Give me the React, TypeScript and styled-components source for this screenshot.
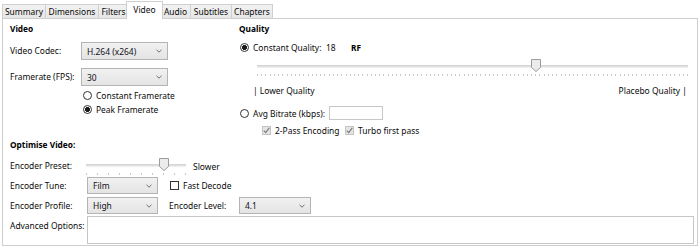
import React from 'react';
import styled, { createGlobalStyle } from 'styled-components';

const Global = createGlobalStyle`
  html, body { margin: 0; padding: 0; background: #fff; }
  body {
    font-family: "Noto Sans", "Open Sans", sans-serif;
    font-size: 8.45px;
    color: #0a0a0a;
  }
  * { box-sizing: border-box; }
`;

const Window = styled.div`
  width: 700px;
  height: 248px;
  overflow: hidden;
  background: #fff;
`;

const TabStrip = styled.div`
  display: flex;
  align-items: flex-end;
  height: 19px;
  padding-left: 2px;
  margin-bottom: -1px;
  position: relative;
  z-index: 1;
`;

const Tab = styled.div<{ $active?: boolean; $w: number; $first?: boolean }>`
  width: ${p => p.$w}px;
  height: ${p => (p.$active ? 18 : 14)}px;
  margin-bottom: ${p => (p.$active ? 0 : 1)}px;
  margin-left: ${p => (p.$first ? 0 : p.$active ? -3 : -1)}px;
  margin-right: ${p => (p.$active ? -2 : 0)}px;
  position: relative;
  z-index: ${p => (p.$active ? 2 : 1)};
  border: 1px solid #cfcfcf;
  border-bottom: none;
  background: ${p => (p.$active ? '#fff' : 'linear-gradient(#f2f2f2, #e6e6e6)')};
  display: flex;
  align-items: center;
  justify-content: center;
  white-space: nowrap;
  padding-bottom: ${p => (p.$active ? 2 : 0)}px;
`;

const Panel = styled.div`
  margin-left: 2px;
  width: 696px;
  height: 228px;
  border: 1px solid #cfcfcf;
  background: #fff;
  display: flex;
  flex-direction: column;
`;

const TopSection = styled.div`
  display: grid;
  grid-template-columns: 236px 1fr;
  padding-top: 4px;
`;

const Column = styled.div<{ $pl: number; $pr?: number }>`
  display: flex;
  flex-direction: column;
  padding-left: ${p => p.$pl}px;
  padding-right: ${p => p.$pr ?? 0}px;
`;

const SectionTitle = styled.div`
  font-weight: 700;
  font-size: 8.3px;
  height: 12px;
  line-height: 12px;
  color: #000;
`;

const Row = styled.div<{ $mt?: number; $h: number; $ml?: number }>`
  display: flex;
  align-items: center;
  height: ${p => p.$h}px;
  margin-top: ${p => p.$mt ?? 0}px;
  margin-left: ${p => p.$ml ?? 0}px;
  white-space: nowrap;
`;

const FieldLabel = styled.span<{ $w: number; $ml?: number; $pt?: number }>`
  display: inline-block;
  width: ${p => p.$w}px;
  margin-left: ${p => p.$ml ?? 0}px;
  align-self: ${p => (p.$pt ? 'flex-start' : 'auto')};
  padding-top: ${p => p.$pt ?? 0}px;
  line-height: 12px;
  flex-shrink: 0;
`;

const ComboBox = styled.div<{ $w: number; $h: number }>`
  width: ${p => p.$w}px;
  height: ${p => p.$h}px;
  border: 1px solid #b4b4b4;
  background: linear-gradient(#f1f1f1, #e4e4e4);
  display: flex;
  align-items: center;
  justify-content: space-between;
  padding: 0 5px 0 5px;
  flex-shrink: 0;
  color: #101020;
`;

const Chevron = () => (
  <svg width="6" height="4" viewBox="0 0 6 4">
    <path d="M0.5 0.8 L3 3.2 L5.5 0.8" fill="none" stroke="#707070" strokeWidth="1" />
  </svg>
);

const Combo = ({ w, h, children }: { w: number; h: number; children: React.ReactNode }) => (
  <ComboBox $w={w} $h={h}>
    <span>{children}</span>
    <Chevron />
  </ComboBox>
);

const RadioCircle = styled.span<{ $checked?: boolean }>`
  width: 9px;
  height: 9px;
  border-radius: 50%;
  border: 1px solid #333;
  background: ${p => (p.$checked ? 'radial-gradient(circle, #1a1a1a 0 2.2px, #fff 2.7px)' : '#fff')};
  flex-shrink: 0;
  margin-right: 4px;
`;

const CheckBox = styled.span<{ $checked?: boolean; $ml?: number }>`
  width: 9px;
  height: 9px;
  border: 1px solid ${p => (p.$checked ? '#c4c4c4' : '#333')};
  background: ${p => (p.$checked ? '#e4e4e4' : '#fff')};
  display: inline-flex;
  align-items: center;
  justify-content: center;
  flex-shrink: 0;
  margin-right: 4px;
  margin-left: ${p => p.$ml ?? 0}px;
`;

const CheckMark = () => (
  <svg width="7" height="7" viewBox="0 0 7 7">
    <path d="M0.8 3.6 L2.7 5.6 L6.3 0.9" fill="none" stroke="#7a7a7a" strokeWidth="1.1" />
  </svg>
);

const Check = ({ checked, ml }: { checked?: boolean; ml?: number }) => (
  <CheckBox $checked={checked} $ml={ml}>{checked && <CheckMark />}</CheckBox>
);

const TextSpan = styled.span<{ $w?: number; $bold?: boolean; $ml?: number }>`
  display: inline-block;
  width: ${p => (p.$w ? `${p.$w}px` : 'auto')};
  margin-left: ${p => p.$ml ?? 0}px;
  font-weight: ${p => (p.$bold ? 700 : 400)};
  font-size: ${p => (p.$bold ? '8.3px' : 'inherit')};
  color: ${p => (p.$bold ? '#000' : 'inherit')};
  flex-shrink: 0;
`;

const SliderBox = styled.div<{ $w: number; $ml?: number; $mt?: number }>`
  position: relative;
  width: ${p => p.$w}px;
  height: 18px;
  margin-left: ${p => p.$ml ?? 0}px;
  margin-top: ${p => p.$mt ?? 0}px;
  flex-shrink: 0;
`;

const Track = styled.div`
  margin-top: 7px;
  height: 3px;
  background: #e2e2e2;
  border-top: 1px solid #d4d4d4;
  border-bottom: 1px solid #eeeeee;
`;

const TickRow = styled.svg`
  display: block;
  margin-top: 6px;
`;

const ThumbSvg = styled.svg`
  position: absolute;
  top: 1px;
`;

const Slider = ({ w, ticks, value, ml, mt }: { w: number; ticks: number; value: number; ml?: number; mt?: number }) => {
  const xs: number[] = [];
  for (let i = 0; i <= ticks; i++) xs.push(Math.round((i * (w - 1)) / ticks) + 0.5);
  const cx = value * (w - 1);
  return (
    <SliderBox $w={w} $ml={ml} $mt={mt}>
      <Track />
      <TickRow width={w} height="2" viewBox={`0 0 ${w} 2`}>
        {xs.map((x, i) => (
          <line key={i} x1={x} x2={x} y1="0" y2="2" stroke="#c8c8c8" strokeWidth="1" />
        ))}
      </TickRow>
      <ThumbSvg width="10" height="13" viewBox="0 0 10 13" style={{ left: `${cx - 4.5}px` }}>
        <path d="M0.5 0.5 H9.5 V8.5 L5 12.5 L0.5 8.5 Z" fill="#ececec" stroke="#9c9c9c" strokeWidth="1" />
      </ThumbSvg>
    </SliderBox>
  );
};

const ScaleLabels = styled.div`
  display: flex;
  justify-content: space-between;
  width: 434px;
  margin-left: 14px;
  margin-top: 9px;
  height: 12px;
  line-height: 12px;
  white-space: nowrap;
`;

const TextInput = styled.div<{ $w: number; $h: number }>`
  width: ${p => p.$w}px;
  height: ${p => p.$h}px;
  border: 1px solid #c6c6c6;
  background: #fff;
  flex-shrink: 0;
`;

const BottomSection = styled.div`
  display: flex;
  flex-direction: column;
  padding-left: 7px;
  margin-top: 2px;
`;

const Advanced = styled.div`
  width: 607px;
  height: 28px;
  border: 1px solid #c6c6c6;
  background: #fff;
  flex-shrink: 0;
`;

const tabs: { label: string; w: number }[] = [
  { label: 'Summary', w: 44 },
  { label: 'Dimensions', w: 54 },
  { label: 'Filters', w: 31 },
  { label: 'Video', w: 37 },
  { label: 'Audio', w: 31 },
  { label: 'Subtitles', w: 42 },
  { label: 'Chapters', w: 42 },
];

export default function App() {
  return (
    <Window>
      <Global />
      <TabStrip>
        {tabs.map((t, i) => (
          <Tab key={t.label} $w={t.w} $first={i === 0} $active={t.label === 'Video'}>
            {t.label}
          </Tab>
        ))}
      </TabStrip>
      <Panel>
        <TopSection>
          <Column $pl={7}>
            <SectionTitle>Video</SectionTitle>
            <Row $mt={7} $h={18}>
              <FieldLabel $w={71}>Video Codec:</FieldLabel>
              <Combo w={87} h={18}>H.264 (x264)</Combo>
            </Row>
            <Row $mt={8} $h={18}>
              <FieldLabel $w={71}>Framerate (FPS):</FieldLabel>
              <Combo w={87} h={18}>30</Combo>
            </Row>
            <Row $mt={2} $h={14} $ml={73}>
              <RadioCircle />
              <TextSpan>Constant Framerate</TextSpan>
            </Row>
            <Row $h={14} $ml={73}>
              <RadioCircle $checked />
              <TextSpan>Peak Framerate</TextSpan>
            </Row>
          </Column>
          <Column $pl={0} $pr={9}>
            <SectionTitle>Quality</SectionTitle>
            <Row $mt={5} $h={14} $ml={1}>
              <RadioCircle $checked />
              <TextSpan $w={73}>Constant Quality:</TextSpan>
              <TextSpan $w={25}>18</TextSpan>
              <TextSpan $bold>RF</TextSpan>
            </Row>
            <Slider w={431} ticks={102} value={33 / 51} ml={18} mt={4} />
            <ScaleLabels>
              <span>| Lower Quality</span>
              <span>Placebo Quality |</span>
            </ScaleLabels>
            <Row $mt={9} $h={14} $ml={1}>
              <RadioCircle />
              <TextSpan $w={76}>Avg Bitrate (kbps):</TextSpan>
              <TextInput $w={54} $h={14} />
            </Row>
            <Row $mt={3} $h={14} $ml={23}>
              <Check checked />
              <TextSpan $w={70}>2-Pass Encoding</TextSpan>
              <Check checked />
              <TextSpan>Turbo first pass</TextSpan>
            </Row>
          </Column>
        </TopSection>
        <BottomSection>
          <SectionTitle>Optimise Video:</SectionTitle>
          <Row $mt={6} $h={18}>
            <FieldLabel $w={76}>Encoder Preset:</FieldLabel>
            <Slider w={100} ticks={9} value={7 / 9} />
            <TextSpan $ml={7}>Slower</TextSpan>
          </Row>
          <Row $mt={2} $h={17}>
            <FieldLabel $w={77}>Encoder Tune:</FieldLabel>
            <Combo w={71} h={17}>Film</Combo>
            <Check ml={12} />
            <TextSpan>Fast Decode</TextSpan>
          </Row>
          <Row $mt={3} $h={17}>
            <FieldLabel $w={77}>Encoder Profile:</FieldLabel>
            <Combo w={71} h={17}>High</Combo>
            <FieldLabel $w={70} $ml={11}>Encoder Level:</FieldLabel>
            <Combo w={72} h={17}>4.1</Combo>
          </Row>
          <Row $mt={2} $h={28}>
            <FieldLabel $w={77} $pt={4}>Advanced Options:</FieldLabel>
            <Advanced />
          </Row>
        </BottomSection>
      </Panel>
    </Window>
  );
}
